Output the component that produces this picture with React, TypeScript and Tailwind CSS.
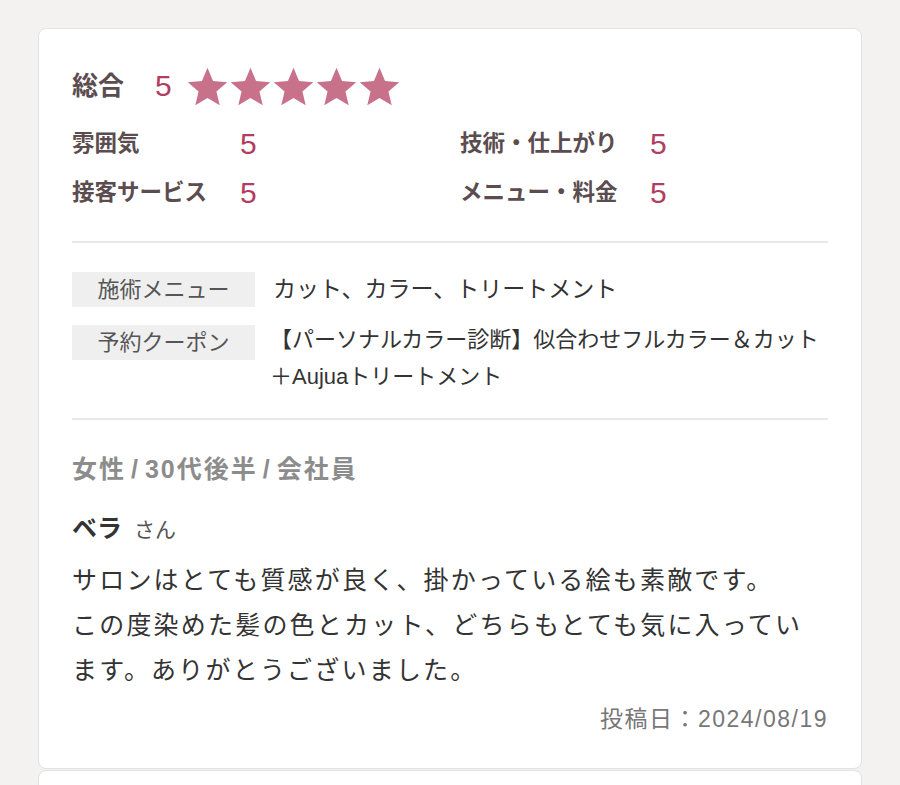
import * as React from 'react';

const jp = { fontFamily: '"Liberation Sans", "Noto Sans CJK JP", sans-serif' };

function Star() {
  return (
    <svg viewBox="0 0 24 24" className="w-[43px] h-[43px]" fill="#c8718a">
      <path d="M12 1.6l3.1 7.3 7.9.7-6 5.2 1.8 7.7L12 18.4l-6.8 4.1 1.8-7.7-6-5.2 7.9-.7z" />
    </svg>
  );
}

function Score({ label, width }: { label: string; width: string }) {
  return (
    <div className="flex items-center h-[36px]">
      <span className={`${width} text-[22.5px] font-bold text-[#5b4d4f]`}>{label}</span>
      <span className="text-[30px] leading-none text-[#b13d60]">5</span>
    </div>
  );
}

export default function App() {
  return (
    <div className="min-h-[785px] bg-[#f3f2f0] pt-[28px] px-[38px]" style={jp}>
      <div className="bg-white border border-[#e2e2e2] rounded-[8px] px-[33px] pt-[37px] pb-[35px]">
        {/* 総合 */}
        <div className="flex items-center h-[40px]">
          <span className="text-[26px] font-bold text-[#5b4d4f] mr-[31px]">総合</span>
          <span className="text-[30px] leading-none text-[#b13d60] mr-[14px]">5</span>
          <div className="flex">
            {[0, 1, 2, 3, 4].map((i) => (
              <Star key={i} />
            ))}
          </div>
        </div>

        <div className="grid grid-cols-[388px_1fr] mt-[20px] gap-y-[13px]">
          <Score label="雰囲気" width="w-[168px]" />
          <Score label="技術・仕上がり" width="w-[190px]" />
          <Score label="接客サービス" width="w-[168px]" />
          <Score label="メニュー・料金" width="w-[190px]" />
        </div>

        <div className="border-t-2 border-[#e8e8e8] mt-[30px]" />

        {/* menu table */}
        <div className="flex flex-col gap-[16px] mt-[28px]">
          <div className="flex items-start">
            <div className="w-[183px] h-[35px] mt-[1px] bg-[#efefef] text-[22px] text-[#555] flex items-center justify-center shrink-0">
              施術メニュー
            </div>
            <div className="pl-[18px] text-[23px] leading-[37px] text-[#333]">カット、カラー、トリートメント</div>
          </div>
          <div className="flex items-start">
            <div className="w-[183px] h-[35px] mt-[1px] bg-[#efefef] text-[22px] text-[#555] flex items-center justify-center shrink-0">
              予約クーポン
            </div>
            <div className="pl-[15px] text-[22px] leading-[37px] -mt-[3px] text-[#333] whitespace-nowrap">
              【パーソナルカラー診断】似合わせフルカラー＆カット
              <br />
              ＋Aujuaトリートメント
            </div>
          </div>
        </div>

        <div className="border-t-2 border-[#e8e8e8] mt-[23px]" />

        {/* review */}
        <p className="mt-[34px] text-[25px] leading-[30px] tracking-[2px] font-bold text-[#8c8c8c]">
          女性<span className="mx-[5px]">/</span>30代後半<span className="mx-[5px]">/</span>会社員
        </p>
        <p className="mt-[29px] leading-[30px] text-[#333]">
          <span className="text-[25px] font-bold">ベラ</span>
          <span className="text-[21px] text-[#555] ml-[12px]">さん</span>
        </p>
        <p className="mt-[11px] text-[25px] leading-[45px] tracking-[2.2px] text-[#333]">
          サロンはとても質感が良く、掛かっている絵も素敵です。
          <br />
          この度染めた髪の色とカット、どちらもとても気に入ってい
          <br />
          ます。ありがとうございました。
        </p>
        <p className="mt-[12px] text-right text-[23px] leading-[28px] tracking-[1.5px] text-[#777]">投稿日：2024/08/19</p>
      </div>
      <div className="bg-white border border-[#e2e2e2] rounded-t-[8px] h-[60px] mt-[1px]" />
    </div>
  );
}
